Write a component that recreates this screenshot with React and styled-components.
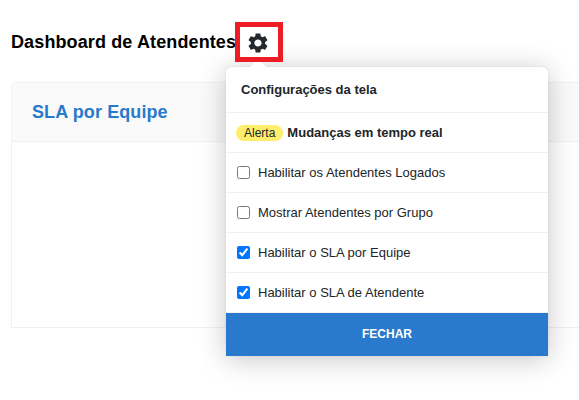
import React, { useState } from "react";
import styled, { createGlobalStyle } from "styled-components";
import { MdSettings } from "react-icons/md";

const GlobalStyle = createGlobalStyle`
  * {
    box-sizing: border-box;
  }

  body {
    margin: 0;
    background: #fff;
    font-family: "Liberation Sans", Arial, sans-serif;
    overflow: hidden;
  }
`;

const Page = styled.main`
  height: 400px;
  padding: 22px 0 0 11px;
  overflow: hidden;
`;

const Header = styled.header`
  display: flex;
  height: 40px;
  align-items: center;
`;

const Title = styled.h1`
  width: 224px;
  margin: 0;
  font-size: 18px;
  letter-spacing: 0.12px;
  line-height: 22px;
  white-space: nowrap;
  color: #000;
`;

const Settings = styled.div`
  position: relative;
`;

const SettingsButton = styled.button`
  position: relative;
  z-index: 2;
  display: flex;
  width: 48px;
  height: 40px;
  padding: 2px 2px 0 0;
  align-items: center;
  justify-content: center;
  border: 5px solid #ee1c25;
  background: #fff;
  color: #24292e;
`;

const Popover = styled.section`
  position: absolute;
  z-index: 1;
  top: 45px;
  left: -9px;
  width: 322px;
  border-radius: 5px 5px 0 0;
  background: #fff;
  box-shadow: 0 0 1px rgba(30, 30, 80, 0.25), 0 3px 28px rgba(0, 0, 0, 0.23);
  color: #212529;

  &::before {
    content: "";
    position: absolute;
    top: -8px;
    left: 24px;
    border: 8px solid transparent;
    border-top: 0;
    border-bottom-color: #fff;
  }
`;

const PopoverTitle = styled.h2`
  height: 46px;
  margin: 0;
  padding: 0 15px;
  border-bottom: 1px solid #f0f1f2;
  font-size: 13px;
  line-height: 45px;
`;

const Row = styled.label`
  display: flex;
  height: 40px;
  padding: 0 10px;
  align-items: center;
  border-bottom: 1px solid #f0f1f2;
  font-size: 13px;
  font-weight: ${(props) => (props.$bold ? "bold" : "normal")};
`;

const Badge = styled.span`
  margin-right: 4px;
  padding: 0 8px;
  border-radius: 8px;
  background: #ffee6b;
  font-size: 12px;
  font-weight: normal;
  line-height: 16px;
`;

const Checkbox = styled.input`
  width: 13px;
  height: 13px;
  margin: 0 8px 0 1px;
`;

const CloseButton = styled.button`
  display: block;
  width: 100%;
  height: 43px;
  padding: 0 0 1px;
  border: 0;
  background: #2979cc;
  color: #fff;
  font-family: inherit;
  font-size: 12px;
  font-weight: bold;
`;

const Card = styled.section`
  height: 246px;
  margin-top: 20px;
  border: 1px solid #ebf3fa;
  border-right: 0;
  border-radius: 5px 0 0 0;
`;

const CardTitle = styled.h2`
  height: 59px;
  margin: 0;
  padding-left: 20px;
  border-bottom: 1px solid #ebf3fa;
  border-radius: 4px 0 0 0;
  background: #fafafa;
  color: #2979cc;
  font-size: 18px;
  letter-spacing: 0.1px;
  line-height: 58px;
`;

function App() {
  const [options, setOptions] = useState([
    { label: "Habilitar os Atendentes Logados", checked: false },
    { label: "Mostrar Atendentes por Grupo", checked: false },
    { label: "Habilitar o SLA por Equipe", checked: true },
    { label: "Habilitar o SLA de Atendente", checked: true },
  ]);
  const [open, setOpen] = useState(true);

  const toggle = (index) => {
    setOptions(
      options.map((option, i) =>
        i === index ? { ...option, checked: !option.checked } : option
      )
    );
  };

  return (
    <Page>
      <GlobalStyle />
      <Header>
        <Title>Dashboard de Atendentes</Title>
        <Settings>
          <SettingsButton onClick={() => setOpen(!open)}>
            <MdSettings size={24} />
          </SettingsButton>
          {open && (
            <Popover>
              <PopoverTitle>Configurações da tela</PopoverTitle>
              <Row as="div" $bold>
                <Badge>Alerta</Badge>
                Mudanças em tempo real
              </Row>
              {options.map((option, index) => (
                <Row key={option.label}>
                  <Checkbox
                    type="checkbox"
                    checked={option.checked}
                    onChange={() => toggle(index)}
                  />
                  {option.label}
                </Row>
              ))}
              <CloseButton onClick={() => setOpen(false)}>FECHAR</CloseButton>
            </Popover>
          )}
        </Settings>
      </Header>
      <Card>
        <CardTitle>SLA por Equipe</CardTitle>
      </Card>
    </Page>
  );
}

export default App;
